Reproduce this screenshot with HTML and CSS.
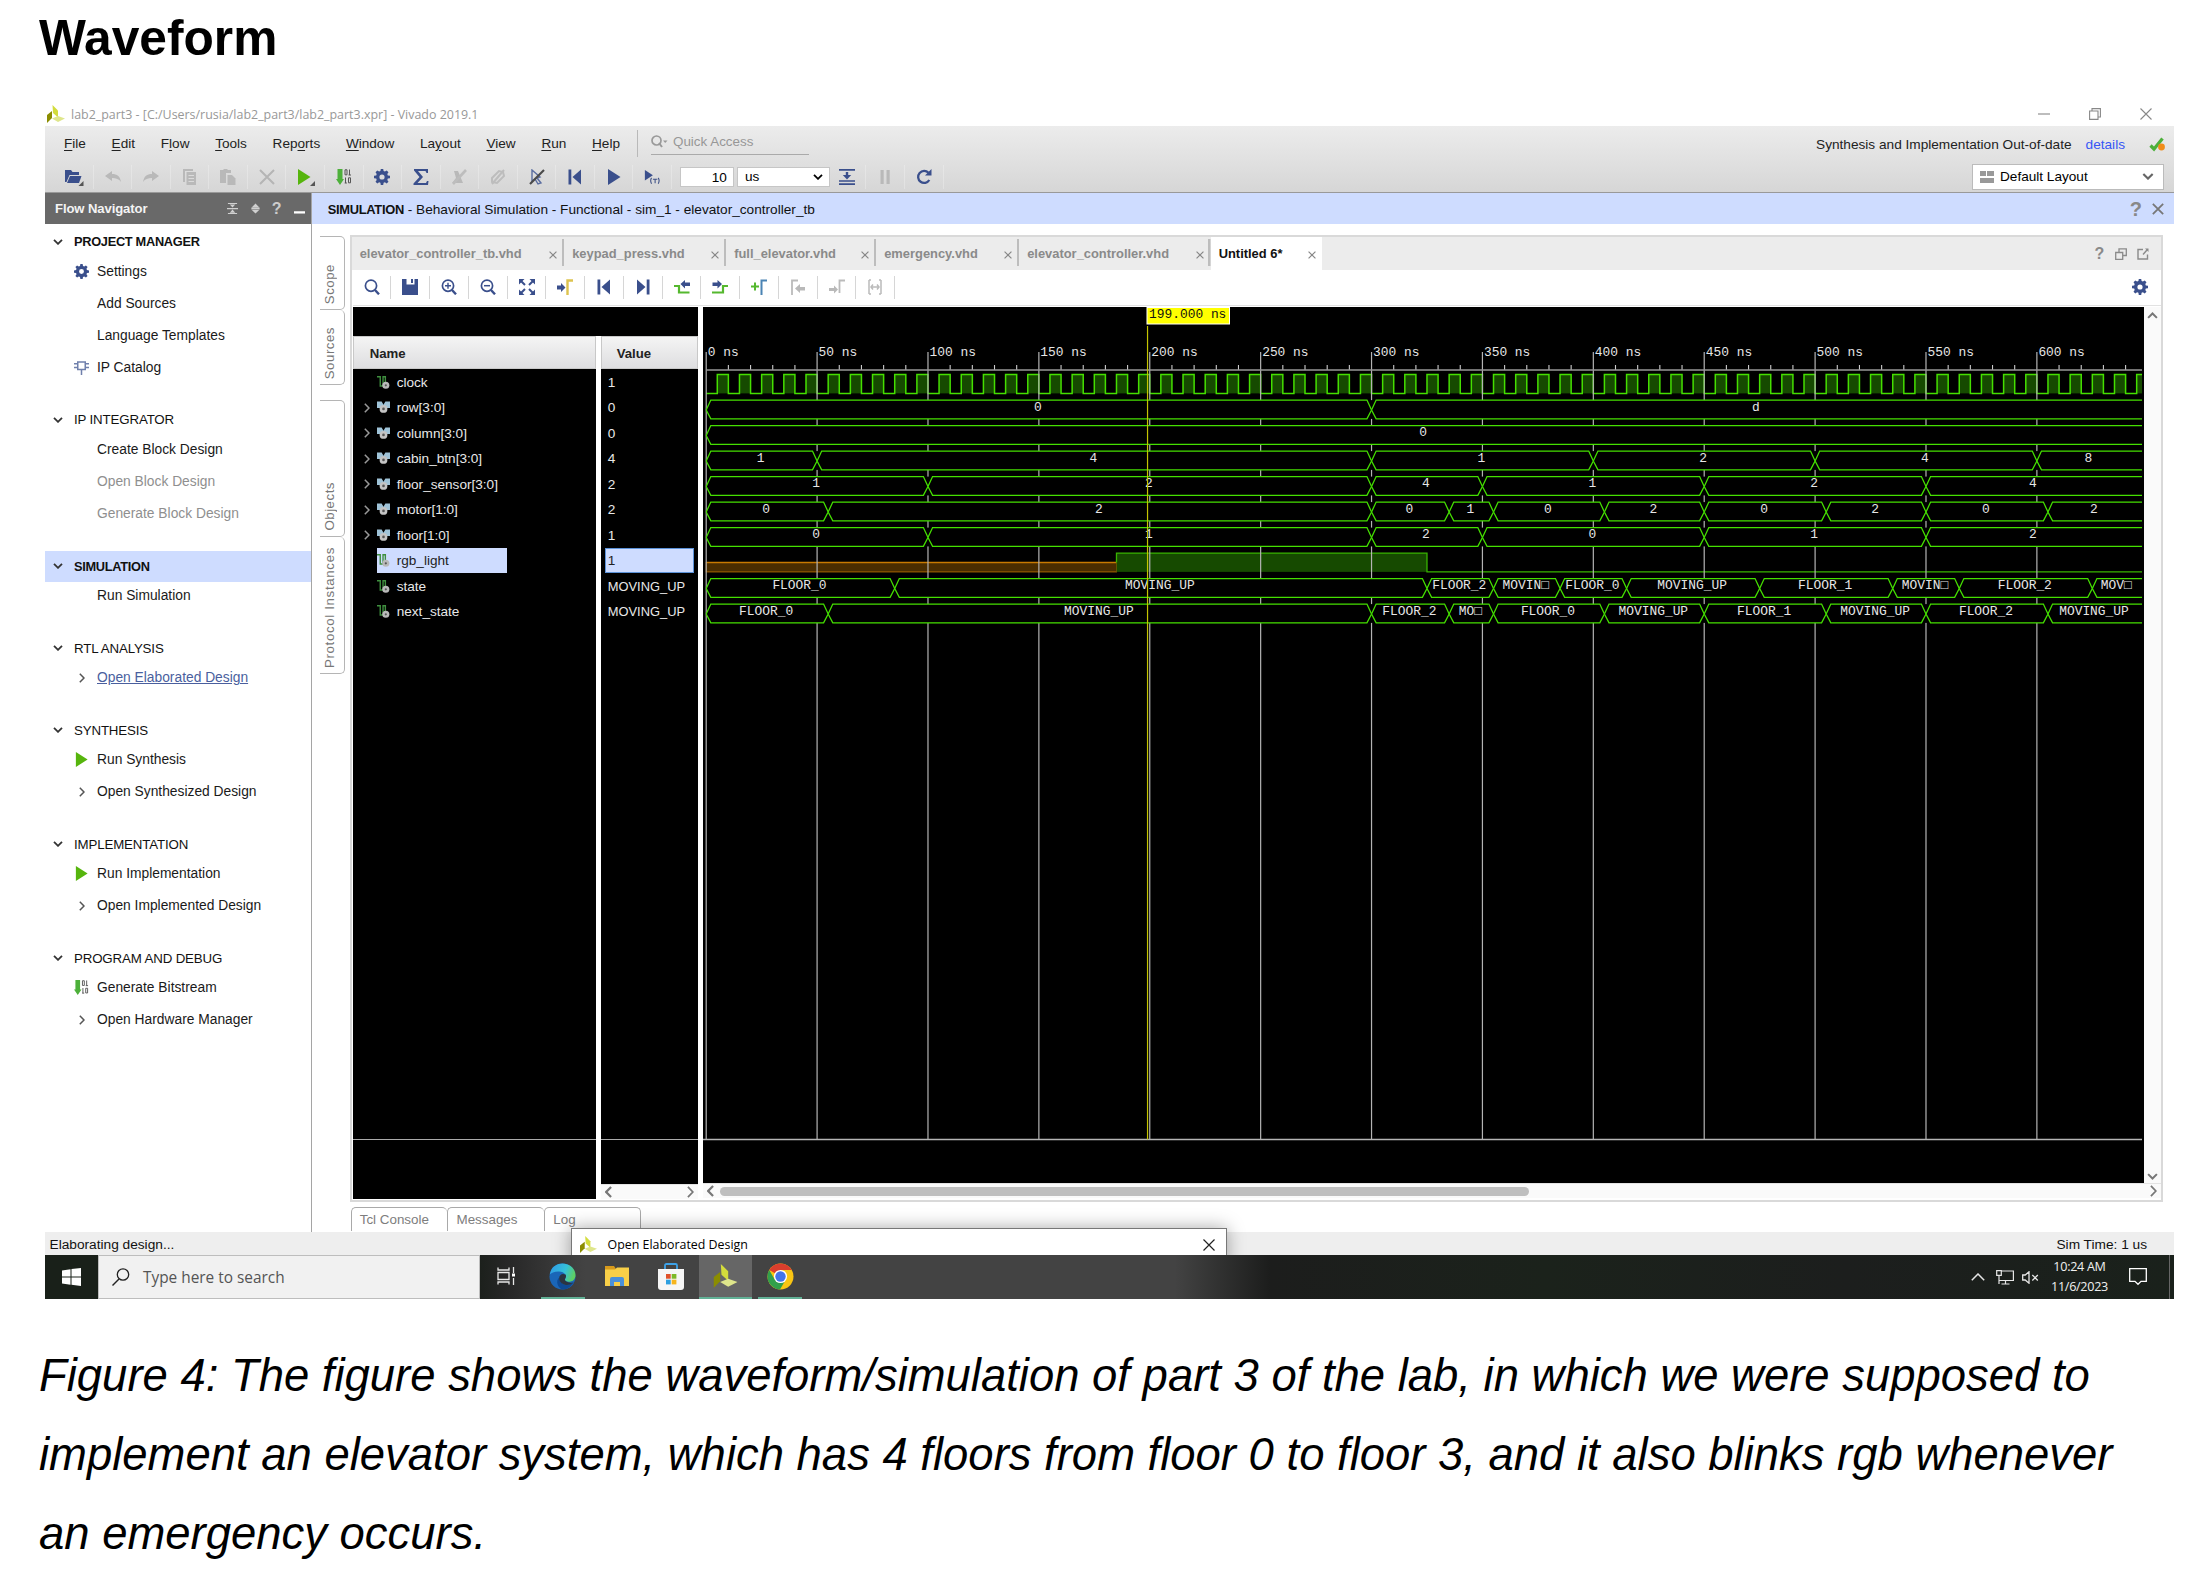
FILE: index.html
```html
<!DOCTYPE html>
<html lang="en">
<head>
<meta charset="utf-8">
<title>Waveform</title>
<link rel="stylesheet" href="styles.css">
</head>
<body>
<svg class="defs" aria-hidden="true">
  <symbol id="logo" viewBox="0 0 18 18"><path d="M5.5 0 11 5.5v7L6 8z" fill="#d3dc3c"/><path d="M0 10l5-4v7l-5 5z" fill="#8b8d00"/><path d="M5 13.5 11 11l7 2.5-7 3.5z" fill="#dfe68b"/></symbol>
  <symbol id="gear" viewBox="0 0 16 16"><path fill-rule="evenodd" d="M6.8 0h2.4l.4 2.1 1.3.5L12.700 1.500l1.800 1.800-1.200 1.800.5 1.300 2.200.4v2.400l-2.200.4-.5 1.300 1.200 1.800-1.800 1.800-1.800-1.200-1.300.5-.4 2.200H6.800l-.4-2.200-1.300-.5-1.800 1.200-1.800-1.800 1.200-1.800-.5-1.300L0 9.200V6.800l2.200-.4.5-1.300-1.200-1.800 1.800-1.800 1.800 1.100 1.300-.5zM8 5.400a2.600 2.600 0 1 0 0 5.200 2.600 2.600 0 0 0 0-5.200z"/></symbol>
  <symbol id="chev-down" viewBox="0 0 10 6"><path d="M1 .8 5 4.800 9 .8" fill="none" stroke="currentColor" stroke-width="1.800"/></symbol>
  <symbol id="chev-right" viewBox="0 0 6 10"><path d="M.8 .7 5 5 .8 9.300" fill="none" stroke="currentColor" stroke-width="1.500"/></symbol>
  <symbol id="chev-left" viewBox="0 0 6 10"><path d="M5.200 .7 1 5l4.200 4.300" fill="none" stroke="currentColor" stroke-width="1.900"/></symbol>
  <symbol id="cross" viewBox="0 0 10 10"><path d="M.7.7l8.600 8.600M9.300.7.7 9.300" fill="none" stroke="currentColor" stroke-width="1.500"/></symbol>
  <symbol id="play" viewBox="0 0 14 16"><path d="M1 0l12.500 8L1 16z"/></symbol>
  <symbol id="bits" viewBox="0 0 16 16"><path d="M1.500 0h5v10H8l-4 6-4-6h1.500z" fill="#4db03a"/><g fill="none" stroke="#555" stroke-width="1"><path d="M9 .8h2v5H9zM13.500.5v5.500M12.500 6h2.500M9.500 8.500V14M8.700 14h2.200M12.500 8.800h2v5h-2z"/></g></symbol>
  <symbol id="first" viewBox="0 0 16 16"><path d="M1.500 0.500h2.800v15H1.500zM14 .5v15L5.500 8z"/></symbol>
  <symbol id="last" viewBox="0 0 16 16"><path d="M11.700.5h2.800v15h-2.800zM2 .5v15L10.500 8z"/></symbol>
  <symbol id="mag" viewBox="0 0 16 16"><g fill="none" stroke="currentColor"><circle cx="7" cy="6.700" r="5.600" stroke-width="1.700"/><path d="M11 11l4 4.300" stroke-width="2.400"/></g></symbol>
  <symbol id="magplus" viewBox="0 0 16 16"><use href="#mag"/><path d="M4 6.700h6M7 3.700v6" stroke="currentColor" stroke-width="1.400"/></symbol>
  <symbol id="magminus" viewBox="0 0 16 16"><use href="#mag"/><path d="M4 6.700h6" stroke="currentColor" stroke-width="1.500"/></symbol>
  <symbol id="popout" viewBox="0 0 12 12"><path d="M6 1.500H1v9.500h9.500V6.500" fill="none" stroke="currentColor" stroke-width="1.400"/><path d="M6 6.500 10 2" stroke="currentColor" stroke-width="1.400"/><path d="M8 .5h3.500V4z"/></symbol>
  <symbol id="restore" viewBox="0 0 12 12"><path d="M.7 4.500h7v6.800h-7zM4 4.500V.8h7.300v6.700H8" fill="none" stroke="currentColor" stroke-width="1.300"/></symbol>
  <symbol id="scalar" viewBox="0 0 14 14"><path d="M0 .8h3.500v10h3V.8H9V8" fill="none" stroke="#3f8f3f" stroke-width="1.500"/><circle cx="9.500" cy="10" r="3.800" fill="#b9b9b9"/><circle cx="9.500" cy="10" r="1.200" fill="#555"/></symbol>
  <symbol id="vector" viewBox="0 0 14 14"><path d="M0 .5h5L7 4l2-3.500h5v7H0z" fill="#9fc3d8"/><circle cx="7" cy="8.500" r="4.200" fill="#c4c4c4"/><circle cx="7" cy="8.500" r="1.400" fill="#555"/></symbol>
</svg>

<h1 class="heading">Waveform</h1>

<main class="screen">
  <div class="titlebar">
    <svg class="logo"><use href="#logo"/></svg>
    <span class="title-text">lab2_part3 - [C:/Users/rusia/lab2_part3/lab2_part3.xpr] - Vivado 2019.1</span>
    <span class="win-buttons">
      <svg viewBox="0 0 12 12"><path d="M0 6h12" stroke="#888" stroke-width="1.100"/></svg>
      <svg viewBox="0 0 12 12"><path d="M.6 3h8.400v8.400H.6zM3 3V.6h8.400V9H9" fill="none" stroke="#888" stroke-width="1.100"/></svg>
      <svg viewBox="0 0 12 12"><path d="M.5.5l11 11M11.500.5l-11 11" stroke="#888" stroke-width="1.100"/></svg>
    </span>
  </div>

  <header class="chrome">
    <div class="menu-row">
      <nav class="menu">
        <span><u>F</u>ile</span><span><u>E</u>dit</span><span>F<u>l</u>ow</span><span><u>T</u>ools</span><span>Rep<u>o</u>rts</span><span><u>W</u>indow</span><span>La<u>y</u>out</span><span><u>V</u>iew</span><span><u>R</u>un</span><span><u>H</u>elp</span>
      </nav>
      <div class="quick"><svg viewBox="0 0 17 13"><circle cx="5.500" cy="5.500" r="4.500" fill="none" stroke="#999" stroke-width="1.700"/><path d="M8 8l3 4" stroke="#999" stroke-width="2"/><path d="M12 5.500h4.500L14.200 8z" fill="#999"/></svg><span>Quick Access</span></div>
      <div class="status-note"><span class="note">Synthesis and Implementation Out-of-date</span><a class="details">details</a>
        <svg viewBox="0 0 16 15"><path d="M1.500 8.500 5 12 13.500 1.500" fill="none" stroke="#4db03a" stroke-width="3.200"/><circle cx="12.500" cy="10" r="3.400" fill="#f08c1a"/></svg></div>
    </div>
    <div class="tool-row">
      <i><svg viewBox="0 0 20 18"><path d="M1 14V2h6l1.500 2H15v3H5.500L2.500 14z"/><path d="M6 8h11.500L15 15H3z"/><path d="M19.500 13v5h-5z" fill="#555"/></svg></i>
      <i class="off"><svg viewBox="0 0 16 16"><path d="M0 7l7-5v3c5 0 8 2 9 8-2-3-5-4-9-4v3z"/></svg></i>
      <i class="off"><svg viewBox="0 0 16 16"><path d="M16 7 9 2v3C4 5 1 7 0 13c2-3 5-4 9-4v3z"/></svg></i>
      <i class="off"><svg viewBox="0 0 16 16"><path d="M1 0h10v2H3v11H1z"/><path fill-rule="evenodd" d="M4.500 3H14v13H4.500zM6.500 6v1h5.500V6zm0 3v1h5.500V9zm0 3v1h5.500v-1z"/></svg></i>
      <i class="off"><svg viewBox="0 0 16 16"><path d="M0 1h3.500V0h4v1H11v3H6v10H0z"/><path d="M7.500 6H12l3.500 3.500V16h-8z"/></svg></i>
      <i class="off"><svg viewBox="0 0 16 16"><path d="M1 1l14 14M15 1 1 15" stroke="#b5b5b5" stroke-width="2"/></svg></i>
      <i class="go"><svg viewBox="0 0 20 18"><path d="M3 1l12.500 8L3 17z"/><path d="M20 13v5h-5z" fill="#555"/></svg></i>
      <i><svg><use href="#bits"/></svg></i>
      <i><svg><use href="#gear"/></svg></i>
      <i><svg viewBox="0 0 16 16"><path d="M1 0h14v4h-1.500L12.500 2H5l5 6-5.500 6H13l1-2h1.500L15 16H.5v-1.500L6.500 8 1 1.500z"/></svg></i>
      <i class="off"><svg viewBox="0 0 16 16"><path d="M3 2h4l5 12H1l4-5z"/><path d="M15 1 2 15" stroke="#bdbdbd" stroke-width="2.600"/></svg></i>
      <i class="off"><svg viewBox="0 0 16 16"><path d="M2 9 9 2l4 1 1 4-7 7-5-1z" fill="none" stroke="#bdbdbd" stroke-width="2"/><path d="M14 1 2 15" stroke="#bdbdbd" stroke-width="2"/></svg></i>
      <i><svg viewBox="0 0 16 16"><path d="M3 1l8 7-3 1 4 5-3 1-3-5-3 2z" fill="none" stroke="#5a6da0" stroke-width="1.400"/><path d="M15 1 1 15" stroke="#4a4a4a" stroke-width="2.200"/></svg></i>
      <i><svg><use href="#first"/></svg></i>
      <i><svg><use href="#play"/></svg></i>
      <i><svg viewBox="0 0 18 16"><path d="M1 0l9 6-9 6z"/><path d="M8.500 9q-2 3 0 6.500M16 9q2 3 0 6.500M10 10.500h5M12.500 10.500V15" fill="none" stroke="#3f5186" stroke-width="1.200"/></svg></i>
      <b class="num">10</b><b class="unit">us<svg class="cd"><use href="#chev-down"/></svg></b>
      <i class="tight"><svg viewBox="0 0 16 16"><path d="M0 0h16v1.800H0zM0 14.200h16V16H0zM0 11.200h16v1.500H0zM6.800 3h2.400v3h3L8 10.500 3.800 6h3z"/></svg></i>
      <i class="off"><svg viewBox="0 0 16 16"><path d="M3.500 1h3.200v14H3.500zM9.500 1h3.200v14H9.500z"/></svg></i>
      <i><svg viewBox="0 0 16 16"><path d="M13.300 11a6 6 0 1 1-.8-7.200" fill="none" stroke="#3a4f8c" stroke-width="2.300"/><path d="M15.500 0v6.500H9z"/></svg></i>
      <div class="layout-select"><svg class="li" viewBox="0 0 14 12"><path d="M0 0h6v5H0zM7 0h7v5H7zM0 7h14v5H0z" fill="#999"/></svg><span>Default Layout</span><svg class="cd"><use href="#chev-down"/></svg></div>
    </div>
  </header>

  <div class="body">
    <aside class="flow">
      <div class="flow-head"><span>Flow Navigator</span>
        <svg viewBox="0 0 12 12"><path d="M1 0h10v1.200H1zM3 1.500h6L6 5zM0 5.500h12v1.200H0zM6 7l3 3.500H3zM1 10.800h10V12H1z"/></svg>
        <svg viewBox="0 0 12 12"><path d="M6 .5 10 4.500H2zM1.500 5h9v2h-9zM2 7.500h8L6 11.500z"/></svg>
        <em>?</em>
        <svg class="dash" viewBox="0 0 12 12"><path d="M0 9h12v2.500H0z" fill="#fff"/></svg>
      </div>
      <section><h2 class="strong pm"><svg class="cd"><use href="#chev-down"/></svg>PROJECT MANAGER</h2>
        <p><i><svg><use href="#gear"/></svg></i>Settings</p><p><i></i>Add Sources</p><p><i></i>Language Templates</p>
        <p><i><svg viewBox="0 0 16 16"><path d="M4 2h8v8H4zM0 4h4M0 8h4M12 4h4M12 8h4M8 10v6" fill="none" stroke="#7080ac" stroke-width="1.600"/></svg></i>IP Catalog</p></section>
      <section><h2><svg class="cd"><use href="#chev-down"/></svg>IP INTEGRATOR</h2>
        <p><i></i>Create Block Design</p><p class="dim"><i></i>Open Block Design</p><p class="dim"><i></i>Generate Block Design</p></section>
      <section><h2 class="strong current"><svg class="cd"><use href="#chev-down"/></svg>SIMULATION</h2>
        <p><i></i>Run Simulation</p></section>
      <section><h2><svg class="cd"><use href="#chev-down"/></svg>RTL ANALYSIS</h2>
        <p class="link"><i><svg class="cr"><use href="#chev-right"/></svg></i><u>Open Elaborated Design</u></p></section>
      <section><h2><svg class="cd"><use href="#chev-down"/></svg>SYNTHESIS</h2>
        <p><i class="go"><svg><use href="#play"/></svg></i>Run Synthesis</p><p><i><svg class="cr"><use href="#chev-right"/></svg></i>Open Synthesized Design</p></section>
      <section><h2><svg class="cd"><use href="#chev-down"/></svg>IMPLEMENTATION</h2>
        <p><i class="go"><svg><use href="#play"/></svg></i>Run Implementation</p><p><i><svg class="cr"><use href="#chev-right"/></svg></i>Open Implemented Design</p></section>
      <section><h2><svg class="cd"><use href="#chev-down"/></svg>PROGRAM AND DEBUG</h2>
        <p><i><svg><use href="#bits"/></svg></i>Generate Bitstream</p><p><i><svg class="cr"><use href="#chev-right"/></svg></i>Open Hardware Manager</p></section>
    </aside>

    <div class="work">
      <div class="sim-head"><span><strong>SIMULATION</strong> - Behavioral Simulation - Functional - sim_1 - elevator_controller_tb</span><em>?</em><svg><use href="#cross"/></svg></div>
      <div class="work-body">
        <div class="side-tabs">
          <div class="st scope"><span>Scope</span></div><div class="st sources"><span>Sources</span></div>
          <div class="st objects"><span>Objects</span></div><div class="st proto"><span>Protocol Instances</span></div>
        </div>
        <div class="center">
          <div class="panel">
            <div class="tabs">
              <div class="tab t1"><span>elevator_controller_tb.vhd</span><svg><use href="#cross"/></svg></div>
              <div class="tab t2"><span>keypad_press.vhd</span><svg><use href="#cross"/></svg></div>
              <div class="tab t3"><span>full_elevator.vhd</span><svg><use href="#cross"/></svg></div>
              <div class="tab t4"><span>emergency.vhd</span><svg><use href="#cross"/></svg></div>
              <div class="tab t5"><span>elevator_controller.vhd</span><svg><use href="#cross"/></svg></div>
              <div class="tab t6 active"><span>Untitled 6*</span><svg><use href="#cross"/></svg></div>
              <div class="tab-tools"><em>?</em><svg><use href="#restore"/></svg><svg><use href="#popout"/></svg></div>
            </div>
            <div class="wave-tools">
              <i><svg><use href="#mag"/></svg></i>
              <i><svg viewBox="0 0 16 16"><path d="M0 0h4.500v5.500h8V0H16v16H0zM9 0h2v4H9z"/></svg></i>
              <i><svg><use href="#magplus"/></svg></i>
              <i><svg><use href="#magminus"/></svg></i>
              <i><svg viewBox="0 0 16 16"><path d="M0 0h5.500L0 5.500zM16 0v5.500L10.500 0zM0 16v-5.500L5.500 16zM16 16h-5.500l5.500-5.500z"/><path d="M2 2l4 4M14 2l-4 4M2 14l4-4M14 14l-4-4" stroke="#3a4f8c" stroke-width="2"/></svg></i>
              <i><svg viewBox="0 0 16 16"><path d="M0 6.500h4V4l4.500 4.500L4 13v-2.500H0z"/><path d="M10.500 16V1.500H16" fill="none" stroke="#ddc34f" stroke-width="2.400"/></svg></i>
              <i><svg><use href="#first"/></svg></i>
              <i><svg><use href="#last"/></svg></i>
              <i><svg viewBox="0 0 16 16"><path d="M0 7h5v6.500h10.500" fill="none" stroke="#55b82e" stroke-width="2.200"/><path d="M6.500 5 11 1v2.500h5v3.500h-5v2.500z"/></svg></i>
              <i><svg viewBox="0 0 16 16"><path d="M0 13.500h11V7h5" fill="none" stroke="#55b82e" stroke-width="2.200"/><path d="M10 5 5.500 1v2.500H.5v3.500h5v2.500z"/></svg></i>
              <i><svg viewBox="0 0 16 16"><path d="M4 3.500v8M0 7.500h8" stroke="#55b82e" stroke-width="2"/><path d="M10.500 16V1.500H16" fill="none" stroke="#4b84b4" stroke-width="2"/></svg></i>
              <i class="off"><svg viewBox="0 0 16 16"><path d="M2 16V1.500h6" fill="none" stroke="#bbb" stroke-width="1.800"/><path d="M5 9.500 10 5v3h5v3.500h-5V14z"/></svg></i>
              <i class="off"><svg viewBox="0 0 16 16"><path d="M10.500 14V1.500H16" fill="none" stroke="#bbb" stroke-width="1.800"/><path d="M9 10.500 5 6.500V9H0v3h5v2.500z"/></svg></i>
              <i class="off"><svg viewBox="0 0 16 16"><path d="M2 1v14M14 1v14M4 8h8M6 5.500 4 8l2 2.500M10 5.500 12 8l-2 2.500M2 1h2M2 15h2M12 1h2M12 15h2" fill="none" stroke="#bbb" stroke-width="1.500"/></svg></i>
              <svg class="prefs"><use href="#gear"/></svg>
            </div>
            <div class="viewer">
              <div class="left-pane">
                <div class="top-strip"></div>
                <div class="cols">
                  <div class="col names"><h3>Name</h3>
                    <ul>
                      <li><i></i><svg><use href="#scalar"/></svg>clock</li>
                      <li><i><svg class="cr"><use href="#chev-right"/></svg></i><svg><use href="#vector"/></svg>row[3:0]</li>
                      <li><i><svg class="cr"><use href="#chev-right"/></svg></i><svg><use href="#vector"/></svg>column[3:0]</li>
                      <li><i><svg class="cr"><use href="#chev-right"/></svg></i><svg><use href="#vector"/></svg>cabin_btn[3:0]</li>
                      <li><i><svg class="cr"><use href="#chev-right"/></svg></i><svg><use href="#vector"/></svg>floor_sensor[3:0]</li>
                      <li><i><svg class="cr"><use href="#chev-right"/></svg></i><svg><use href="#vector"/></svg>motor[1:0]</li>
                      <li><i><svg class="cr"><use href="#chev-right"/></svg></i><svg><use href="#vector"/></svg>floor[1:0]</li>
                      <li><i></i><b><svg><use href="#scalar"/></svg>rgb_light</b></li>
                      <li><i></i><svg><use href="#scalar"/></svg>state</li>
                      <li><i></i><svg><use href="#scalar"/></svg>next_state</li>
                    </ul>
                  </div>
                  <div class="col values"><h3>Value</h3>
                    <ul><li>1</li><li>0</li><li>0</li><li>4</li><li>2</li><li>2</li><li>1</li><li><b>1</b></li><li class="enum">MOVING_UP</li><li class="enum">MOVING_UP</li></ul>
                    <div class="hscroll small"><svg><use href="#chev-left"/></svg><svg class="cr"><use href="#chev-right"/></svg></div>
                  </div>
                </div>
              </div>
              <div class="right-pane">
                <div class="wave-row">
                  <svg id="wave" width="1441" height="876" viewBox="703 307 1441 876"></svg>
                  <div class="vscroll"><svg class="up"><use href="#chev-down"/></svg><svg><use href="#chev-down"/></svg></div>
                </div>
                <div class="hscroll wide"><svg><use href="#chev-left"/></svg><div class="thumb"></div><svg class="cr"><use href="#chev-right"/></svg></div>
              </div>
            </div>
          </div>
          <div class="bottom-tabs"><span>Tcl Console</span><span>Messages</span><span>Log</span></div>
        </div>
      </div>
    </div>
  </div>

  <footer class="statusbar"><span>Elaborating design...</span><span class="simtime">Sim Time: 1 us</span></footer>

  <div class="popup"><svg class="logo"><use href="#logo"/></svg><span>Open Elaborated Design</span><svg class="x" viewBox="0 0 12 12"><path d="M.5.5l11 11M11.500.5l-11 11" stroke="#222" stroke-width="1.200"/></svg></div>

  <div class="taskbar">
    <div class="start"><svg viewBox="0 0 19 18"><path d="M0 2.500 8.500 1.300v7.200H0zM9.500 1.100 19 0v8.500H9.500zM0 9.500h8.500v7.200L0 15.500zM9.500 9.500H19V18l-9.500-1.200z" fill="#fff"/></svg></div>
    <div class="search"><svg viewBox="0 0 18 18"><circle cx="11" cy="6.500" r="5.700" fill="none" stroke="#222" stroke-width="1.300"/><path d="M7 11 .5 17.500" stroke="#222" stroke-width="1.400"/></svg><span>Type here to search</span></div>
    <div class="apps">
      <div class="app"><svg viewBox="0 0 19 18"><path d="M1 .5v2.500h11V.5M1 17.500V15h11v2.500M1 5.500h11v7H1zM16.500 0v6M16.500 11v7" fill="none" stroke="#e8e8e8" stroke-width="1.300"/><path d="M15 6.500h3v3h-3z" fill="#fff"/></svg></div>
      <div class="app run edge"><svg viewBox="0 0 28 28"><defs><linearGradient id="eg" x1="0" x2="1" y1=".2" y2=".5"><stop offset="0" stop-color="#2f9be6"/><stop offset=".6" stop-color="#35c1d8"/><stop offset="1" stop-color="#5fd060"/></linearGradient></defs><circle cx="14" cy="14" r="13.500" fill="#1a66b8"/><path d="M.8 12C2 4.500 7.500.5 14 .5c8 0 13.500 6 13.500 12 0 5-3.500 7-7 7-3 0-4.500-1.200-4-2.500 1.300-1.500 1.500-3.500.5-5C15.500 9.500 12.500 8.500 9.500 8.800 5.500 9 2 10.500.8 12z" fill="url(#eg)"/><path d="M10.500 15c0 5 5 8.500 9.500 7.500 2-.4 4-1.500 5.500-2.500-2 4-6 7.500-11.500 7.500C9 26 6.500 18.500 10.500 15z" fill="#0e4a94"/><path d="M17 12c-3-1.500-6.500 0-6.500 4 0 3 2.500 5.500 6 6.500 3.500.8 7-.5 9-2.500-2.500 1-6 .5-8-1-1.500-1.500-1-2.500-.5-3.500 1-1.200.8-2.700 0-3.500z" fill="#2b3440"/></svg></div>
      <div class="app folder"><svg viewBox="0 0 24 20"><path d="M0 0h9l2 3v4H0z" fill="#d79a1c"/><path d="M0 3.500h10L12 1.500h12V20H0z" fill="#f8cf48"/><path d="M5 20v-7q0-2 2-2h10q2 0 2 2v7h-4v-4H9v4z" fill="#4a90d9"/></svg></div>
      <div class="app store"><svg viewBox="0 0 26 27"><path d="M7 6V2.500Q7 1 8.500 1h9Q19 1 19 2.500V6" fill="none" stroke="#3da2e8" stroke-width="1.800"/><path d="M0 6h26v18q0 3-3 3H3q-3 0-3-3z" fill="#f6f6f6"/><path d="M8 11h4.700v4.700H8z" fill="#e0522a"/><path d="M13.700 11h4.700v4.700h-4.700z" fill="#7db928"/><path d="M8 16.700h4.700v4.700H8z" fill="#2d9fe0"/><path d="M13.700 16.700h4.700v4.700h-4.700z" fill="#f6b51d"/></svg></div>
      <div class="app run vivado"><svg viewBox="0 0 18 18"><use href="#logo"/></svg></div>
      <div class="app run chrome-app"><svg viewBox="0 0 28 28"><circle cx="14" cy="14" r="13.500" fill="#f9c513"/><path d="M14 14 2.300 7.200A13.500 13.500 0 0 1 25.700 7.200H14z" fill="#db3e2d"/><path d="M2.300 7.200A13.500 13.500 0 0 0 13.500 27.500l6-10.300L14 14 8 17z" fill="#31a04b"/><circle cx="14" cy="14" r="6.800" fill="#fff"/><circle cx="14" cy="14" r="5.400" fill="#4374e8"/></svg></div>
    </div>
    <div class="tray">
      <svg class="caret" viewBox="0 0 14 8"><path d="M.8 7.200 7 1l6.200 6.200" fill="none" stroke="#e6e6e6" stroke-width="1.500"/></svg>
      <svg class="net" viewBox="0 0 18 15"><path d="M5.500 1H17.400v9.500H3V6M.7.7h4.600v4.600H.7zM9.500 10.500V14M5.500 14h8M3 6v8" fill="none" stroke="#e6e6e6" stroke-width="1.200"/></svg>
      <svg class="vol" viewBox="0 0 17 13"><path d="M.7 4h2.500L7 .8v11.400L3.200 9H.7zM10.300 4l5.500 5.500M15.800 4l-5.500 5.500" fill="none" stroke="#e6e6e6" stroke-width="1.300"/></svg>
      <div class="clock"><span>10:24 AM</span><span>11/6/2023</span></div>
      <svg class="notif" viewBox="0 0 18 18"><path d="M.7.7h16.600v12.600H12l-3 3-3-3H.7z" fill="none" stroke="#fff" stroke-width="1.300"/></svg>
      <div class="desk"></div>
    </div>
  </div>
</main>

<p class="caption"><span class="l1">Figure 4: The figure shows the waveform/simulation of part 3 of the lab, in which we were supposed to</span><br><span class="l2">implement an elevator system, which has 4 floors from floor 0 to floor 3, and it also blinks rgb whenever</span><br><span class="l3">an emergency occurs.</span></p>
<script src="wave.js"></script>
</body>
</html>
```
FILE: styles.css
```css
* { box-sizing: border-box; }
body { margin: 0; width: 2206px; height: 1582px; overflow: hidden; background: #fff; font-family: "Liberation Sans", Arial, sans-serif; color: #000; }
.defs { position: absolute; width: 0; height: 0; }
svg { display: block; flex: none; }
i, em { font-style: normal; }
ul { list-style: none; margin: 0; padding: 0; }

.heading { margin: 0; height: 101px; padding: 8px 0 0 39px; font-size: 49.700px; line-height: 60px; font-weight: 700; }
.caption { margin: 37px 0 0 39px; font-size: 45.450px; line-height: 79px; font-style: italic; white-space: nowrap; }

.screen { position: relative; display: flex; flex-direction: column; width: 2129px; height: 1198px; margin-left: 45px; font-size: 13.6px; white-space: nowrap; overflow: hidden; }

.titlebar { display: flex; align-items: center; height: 25px; padding-left: 2px; color: #989898; font-family: "Open Sans", "Noto Sans", sans-serif; font-size: 12.450px; }
.titlebar .title-text { margin-left: 6px; padding-top: 1px; }
.logo { width: 18px; height: 18px; }
.win-buttons { display: flex; gap: 39px; margin-left: auto; margin-right: 22px; }
.win-buttons svg { width: 12px; height: 12px; }

.chrome { height: 67px; background: linear-gradient(#ececec, #d6d6d6); border-bottom: 1.500px solid #999; color: #222; }
.menu-row { display: flex; height: 34px; align-items: center; }
.menu { display: flex; gap: 25.700px; padding-left: 19px; width: 593px; height: 27px; align-items: center; border-right: 1px solid #b9b9b9; }
.menu u { text-underline-offset: 2px; }
.quick { display: flex; align-items: center; gap: 5px; width: 158px; height: 25px; margin: -2px 0 0 13px; border-bottom: 1.500px solid #aaa; color: #979797; font-size: 13.400px; }
.quick svg { width: 17px; height: 13px; }
.status-note { display: flex; align-items: center; margin-left: auto; padding: 2px 9px 0 0; font-size: 13.650px; }
.status-note .details { margin: 0 24px 0 14px; color: #3656f5; }
.status-note svg { width: 16px; height: 15px; }

.tool-row { display: flex; height: 32px; align-items: center; padding: 1px 0 0 10.200px; }
.tool-row i, .wave-tools i { display: flex; justify-content: center; align-items: center; flex: none; width: 38.750px; fill: #3a4f8c; color: #3a4f8c; }
.tool-row i { width: 38.550px; height: 24px; border-right: 1px solid rgba(255,255,255,.25); }
.tool-row i svg { width: 16px; height: 16px; }
.tool-row i:first-child svg, .tool-row i.go svg { width: 20px; height: 18px; }
.tool-row i.off, .wave-tools i.off { fill: #b9b9b9; }
i.go { fill: #56b50d !important; }
.tool-row b { font-weight: 400; background: #fff; border: 1px solid #c6c6c6; height: 20px; line-height: 19px; color: #000; }
.tool-row .num { width: 54px; margin-left: 8px; padding-right: 6px; text-align: right; }
.tool-row .unit { display: flex; align-items: center; justify-content: space-between; width: 93px; margin-left: 3px; padding: 0 6px 0 7px; }
.tool-row .tight { margin-left: -2px; }
svg.cd { width: 10px; height: 6px; }
svg.cr { width: 6px; height: 10px; }
.layout-select { display: flex; align-items: center; width: 192px; height: 26px; margin-left: auto; margin-right: 10px; padding: 0 9px 0 7px; background: #fff; border: 1px solid #bbb; color: #000; }
.layout-select .li { width: 14px; height: 12px; margin-right: 6px; }
.layout-select .cd { margin-left: auto; width: 12px; height: 7px; color: #666; }

.body { display: flex; height: 1039px; }
.flow { width: 266.700px; border-right: 1.500px solid #a5a5a5; font-size: 13.800px; }
.flow-head { display: flex; align-items: center; height: 31px; margin-bottom: 2px; padding: 0 6px 0 10px; background: #696969; color: #f4f4f4; fill: #d0d0d0; font-size: 13.100px; font-weight: 700; letter-spacing: -.1px; }
.flow-head span { margin-right: auto; }
.flow-head svg { width: 11px; height: 11px; margin-left: 12px; }
.flow-head em { margin-left: 11px; width: 10px; font-size: 16px; color: #ccc; text-align: center; }
.flow section { display: flex; flex-direction: column; gap: 5.600px; margin-bottom: 24.300px; }
.flow h2 { display: flex; align-items: center; height: 31px; margin: 0 0 -5.600px; padding-left: 7.500px; font-size: 13.300px; font-weight: 400; letter-spacing: -.15px; color: #111; }
.flow h2.strong { font-weight: 700; font-size: 12.800px; letter-spacing: -.3px; }
.flow h2.current { background: #cedcff; }
.flow h2 .cd { margin-right: 11.500px; color: #333; }
.flow p { display: flex; align-items: center; height: 26.600px; margin: 0; padding-top: 1.500px; color: #1a1a1a; }
.flow p i { display: flex; justify-content: center; width: 31px; margin-left: 21px; fill: #3a4f8c; color: #555; }
.flow p i svg:not(.cr) { width: 15px; height: 15px; }
.flow p.dim { color: #8f8f8f; }
.flow p.link { color: #4a5f9e; }

.work { flex: 1; display: flex; flex-direction: column; }
.sim-head { display: flex; align-items: center; height: 31px; padding: 1px 10px 0 16px; background: #cedcff; color: #111; font-size: 13.650px; }
.sim-head strong { font-size: 12.900px; letter-spacing: -.3px; }
.sim-head em { margin-left: auto; margin-right: 10px; font-size: 20px; font-weight: 700; color: #888; }
.sim-head svg { width: 12px; height: 12px; color: #777; }
.work-body { display: flex; flex: 1; }
.side-tabs { width: 38px; padding: 12px 0 0 8px; }
.st { display: flex; align-items: flex-end; width: 25px; padding: 0 0 5px 2px; border: 1.500px solid #b5b5b5; border-left: 0; border-radius: 0 5px 5px 0; color: #777; font-size: 13.300px; letter-spacing: .5px; }
.st span { writing-mode: vertical-rl; transform: rotate(180deg); }
.st.proto { letter-spacing: .65px; }
.st.scope { height: 74px; }
.st.sources { height: 75px; border-top: 0; }
.st.objects { height: 137px; margin-top: 15px; }
.st.proto { height: 137px; border-top: 0; }

.center { flex: 1; }
.panel { width: 1813.500px; height: 967px; margin-top: 11px; border: 2px solid #d9d9d9; padding-left: 1px; background: #fff; }
.tabs { display: flex; height: 33px; margin-left: -1px; background: #ececec; color: #8a8a8a; font-weight: 700; font-size: 12.900px; }
.tab { display: flex; align-items: center; justify-content: space-between; padding: 0 7px 0 8px; background: linear-gradient(#bdbdbd, #bdbdbd) right 2px / 2.500px 27px no-repeat; }
.tab svg { width: 8px; height: 8px; margin-top: 2px; color: #888; }
.tab.active { background: #fff; color: #111; }
.t1 { width: 212.500px; } .t2 { width: 162px; } .t3 { width: 150px; } .t4 { width: 143px; } .t5 { width: 191.500px; } .t6 { width: 111px; padding-right: 6px; }
.tab-tools { display: flex; align-items: center; gap: 10.500px; margin-left: auto; padding: 1px 12px 0 0; fill: #888; }
.tab-tools em { font-size: 16px; }
.tab-tools svg { width: 12px; height: 12px; }
.wave-tools { display: flex; align-items: center; height: 36px; border-bottom: 1.500px solid #e2e2e2; }
.wave-tools i { height: 23px; border-right: 1px solid #d6d6d6; }
.wave-tools i svg { width: 16px; height: 16px; margin-top: -1px; }
.prefs { width: 16px; height: 16px; margin: -1px 13px 0 auto; fill: #3a4f8c; }

.viewer { display: flex; height: 892px; padding-top: 1px; }
.left-pane { width: 345px; margin-right: 5px; }
.top-strip { height: 29px; background: #000; }
.cols { display: flex; gap: 5px; height: 863px; }
.col { background: #000; color: #e8e8e8; }
.names { width: 243px; }
.values { display: flex; flex-direction: column; width: 97px; }
.col h3 { height: 33px; margin: 0; padding: 1px 0 0 16px; border: 1px solid #c8c8c8; background: linear-gradient(#f4f4f4, #dedee0); color: #222; font-size: 13.200px; line-height: 31px; }
.values h3 { padding-left: 15px; }
.col ul { height: 771px; border-bottom: 1.500px solid #aaa; }
.col li { display: flex; align-items: center; height: 25.520px; padding-top: 1px; }
.names li i { display: flex; justify-content: center; width: 24.500px; padding-left: 4px; color: #999; }
.names li > svg { width: 13px; height: 13px; margin: 0 6.500px 0 0; }
.names li b { display: flex; align-items: center; width: 130px; height: 25px; background: #cedcff; color: #222; font-weight: 400; }
.names li b svg { width: 13px; height: 13px; margin-right: 6.500px; }
.values li { padding-left: 7px; }
.values li b { width: 89px; height: 25px; margin-left: -3px; padding-left: 2px; border: 1.500px solid #5c92d8; background: #cedcff; color: #222; font-weight: 400; line-height: 23px; }
.values .enum { font-size: 12.900px; }
.hscroll { display: flex; align-items: center; justify-content: space-between; flex: 1; padding: 0 4px; background: #fafafa; border-top: 1px solid #e3e3e3; color: #777; }
.hscroll.small { flex: none; height: 15.500px; margin-top: auto; }
.hscroll svg { width: 7px; height: 12px; }
.right-pane { display: flex; flex-direction: column; width: 1458px; }
.wave-row { display: flex; height: 876px; }
#wave { background: #000; font-family: "Liberation Mono", "Courier New", monospace; font-size: 12.900px; }
.vscroll { display: flex; flex-direction: column; justify-content: space-between; align-items: center; flex: 1; padding: 5px 0 3px; background: #fafafa; color: #777; }
.vscroll svg { width: 11px; height: 7px; }
.vscroll .up { transform: rotate(180deg); }
.wide { gap: 6px; }
.thumb { width: 809px; height: 9px; margin-right: auto; border-radius: 5px; background: #bfbfbf; }

.bottom-tabs { display: flex; margin: 5px 0 0 1px; color: #7d7d7d; font-size: 13.400px; }
.bottom-tabs span { width: 96.800px; height: 24px; padding-left: 8px; line-height: 24px; border: 1.500px solid #a9a9a9; border-bottom: 0; border-right: 0; border-radius: 5px 5px 0 0; }
.bottom-tabs span:last-child { border-right: 1.500px solid #a9a9a9; }

.statusbar { display: flex; justify-content: space-between; height: 23px; padding: 0 27px 0 4.500px; line-height: 25px; background: #eee; color: #111; font-size: 13.700px; }
.popup { position: absolute; left: 526px; top: 1127px; width: 655.500px; height: 40px; display: flex; align-items: flex-start; padding: 7px 11px 0 8px; background: #fff; border: 1.500px solid #777; box-shadow: 0 0 18px rgba(0,0,0,.35); font-family: "Open Sans", "Noto Sans", sans-serif; font-size: 12.400px; line-height: 18px; }
.popup .logo { width: 17px; height: 17px; margin-right: 10.500px; }
.popup .x { width: 12px; height: 12px; margin: 3px 0 0 auto; }

.taskbar { position: relative; display: flex; height: 44px; background: linear-gradient(90deg, #1c201c 435px, #262626 460px, #434343 540px, #434343 1130px, #1c1d1c 1225px, #1b221b 1500px, #1c1e1d 1800px, #1a211b); font-family: "Open Sans", "Noto Sans", sans-serif; }
.start { display: flex; align-items: center; justify-content: center; width: 53px; background: #192019; }
.start svg { width: 19px; height: 18px; }
.search { display: flex; align-items: center; width: 381.500px; padding-left: 13px; background: #f1f1f1; border: 1px solid #bdbdbd; color: #555; font-size: 15.400px; }
.search svg { width: 18px; height: 18px; margin-right: 13px; }
.apps { display: flex; }
.app { display: flex; align-items: center; justify-content: center; width: 44px; margin-left: 10px; border-bottom: 2.500px solid transparent; }
.app:first-child { width: 53px; margin-left: 0; }
.app:first-child svg { width: 19px; height: 18px; }
.run { border-bottom-color: #62b196; }
.edge { margin-left: 8px; }
.edge svg, .chrome-app svg { width: 27px; height: 27px; }
.folder svg { width: 24px; height: 20px; }
.store svg { width: 26px; height: 27px; }
.vivado { width: 53px; margin-left: 6px; background: #666; }
.vivado svg { width: 25px; height: 24px; }
.chrome-app { margin-left: 6.500px; }
.tray { display: flex; align-items: center; margin-left: auto; color: #f0f0f0; }
.caret { width: 14px; height: 8px; margin-right: 11px; }
.net { width: 18px; height: 15px; margin-right: 8px; }
.vol { width: 17px; height: 13px; margin-right: 10px; }
.clock { display: flex; flex-direction: column; width: 62px; align-items: center; font-size: 12.600px; line-height: 20px; letter-spacing: -.3px; }
.notif { width: 18px; height: 18px; margin: 0 22px 0 18px; }
.desk { width: 5.500px; height: 44px; border-left: 1.500px solid #666; }
```
FILE: wave.js
```js
const svg = document.getElementById('wave');
const X0 = 706.2, SCALE = 2.2178, END = 2142, BOTTOM = 1139.5;
const x = ns => Math.min(X0 + ns * SCALE, END);
const rowTop = k => 374.6 + 25.5 * k;
const H = 18.8;
const BRIGHT = '#45df00', FILL = '#164a00';
const out = [];
const line = (x1, y1, x2, y2, color, w = 1.1) =>
  out.push(`<path d="M${x1} ${y1}L${x2} ${y2}" stroke="${color}" stroke-width="${w}" fill="none"/>`);
const text = (tx, ty, s, anchor = 'middle', color = '#e6e6e6') =>
  out.push(`<text x="${tx}" y="${ty}" text-anchor="${anchor}" fill="${color}">${s}</text>`);

// Clock: high during the second half of every 10 ns period
let d = `M${X0} ${rowTop(0) + H}`;
for (let t = 5; x(t) < END; t += 10) {
  const a = x(t), b = x(t + 5);
  out.push(`<rect x="${a}" y="${rowTop(0)}" width="${b - a}" height="${H}" fill="${FILL}"/>`);
  d += `H${a}V${rowTop(0)}H${b}` + (b < END ? `V${rowTop(0) + H}` : '');
}
out.push(`<path d="${d}" fill="none" stroke="${BRIGHT}" stroke-width="1.5"/>`);

// rgb_light: unknown, then high, then low
const r = rowTop(7);
out.push(`<rect x="${X0}" y="${r + H / 2}" width="${x(185) - X0}" height="${H / 2}" fill="#4a2d00" stroke="#a86400"/>`);
line(X0, r + H / 2, x(185), r + H / 2, '#c87a00', 1.4);
out.push(`<rect x="${x(185)}" y="${r}" width="${x(325) - x(185)}" height="${H}" fill="${FILL}"/>`);
out.push(`<path d="M${x(185)} ${r + H / 2}V${r}H${x(325)}V${r + H}H${END}" fill="none" stroke="#38b400" stroke-width="1.3"/>`);

// Time grid
for (let t = 0; x(t) < END; t += 10) {
  if (t % 50) { line(x(t), 365, x(t), 370, '#ccc', 1.1); continue; }
  line(x(t), 352, x(t), BOTTOM, '#b4b4b4', 1.2);
  text(x(t) + 1.5, 355.5, t + ' ns', 'start');
}
line(X0, 370, END, 370, '#999', 1.6);
line(703, BOTTOM, END, BOTTOM, '#b4b4b4', 1.5);

// Buses: [start ns, label]
const buses = {
  1: [[0, '0'], [300, 'd']],
  2: [[0, '0']],
  3: [[0, '1'], [50, '4'], [300, '1'], [400, '2'], [500, '4'], [600, '8']],
  4: [[0, '1'], [100, '2'], [300, '4'], [350, '1'], [450, '2'], [550, '4']],
  5: [[0, '0'], [55, '2'], [300, '0'], [335, '1'], [355, '0'], [405, '2'], [450, '0'], [505, '2'], [550, '0'], [605, '2']],
  6: [[0, '0'], [100, '1'], [300, '2'], [350, '0'], [450, '1'], [550, '2']],
  8: [[0, 'FLOOR_0'], [85, 'MOVING_UP'], [325, 'FLOOR_2'], [355, 'MOVIN□'], [385, 'FLOOR_0'], [415, 'MOVING_UP'], [475, 'FLOOR_1'], [535, 'MOVIN□'], [565, 'FLOOR_2'], [625, 'MOV□']],
  9: [[0, 'FLOOR_0'], [55, 'MOVING_UP'], [300, 'FLOOR_2'], [335, 'MO□'], [355, 'FLOOR_0'], [405, 'MOVING_UP'], [450, 'FLOOR_1'], [505, 'MOVING_UP'], [550, 'FLOOR_2'], [605, 'MOVING_UP']]
};
const labels = [];
for (const k in buses) {
  const t = rowTop(+k), b = t + H, m = t + H / 2 + .5, s = 4.6;
  out.push(`<rect x="${X0 + 1}" y="${t}" width="${END - X0}" height="${H}" fill="#000"/>`);
  buses[k].forEach(([ns, label], i, all) => {
    const last = i === all.length - 1;
    const a = x(ns), e = last ? END : x(all[i + 1][0]);
    const tail = last ? e : e - s;
    const close = last ? '' : `L${e} ${m}`;
    out.push(`<path d="M${a} ${m}L${a + s} ${t}H${tail}${close}M${a} ${m}L${a + s} ${b}H${tail}${close}" fill="none" stroke="${BRIGHT}" stroke-width="1.3"/>`);
    labels.push([(a + e) / 2 - 1, t + 10.8, label]);
  });
}
labels.forEach(l => text(...l));

// Cursor
line(x(199), 326, x(199), BOTTOM, '#c4c400', 1.2);
out.push('<rect x="1147" y="307.500" width="82.500" height="16.500" fill="#ff0" stroke="#fff"/>');
text(1149, 317.5, '199.000 ns', 'start', '#111');
svg.innerHTML = out.join('');
```
